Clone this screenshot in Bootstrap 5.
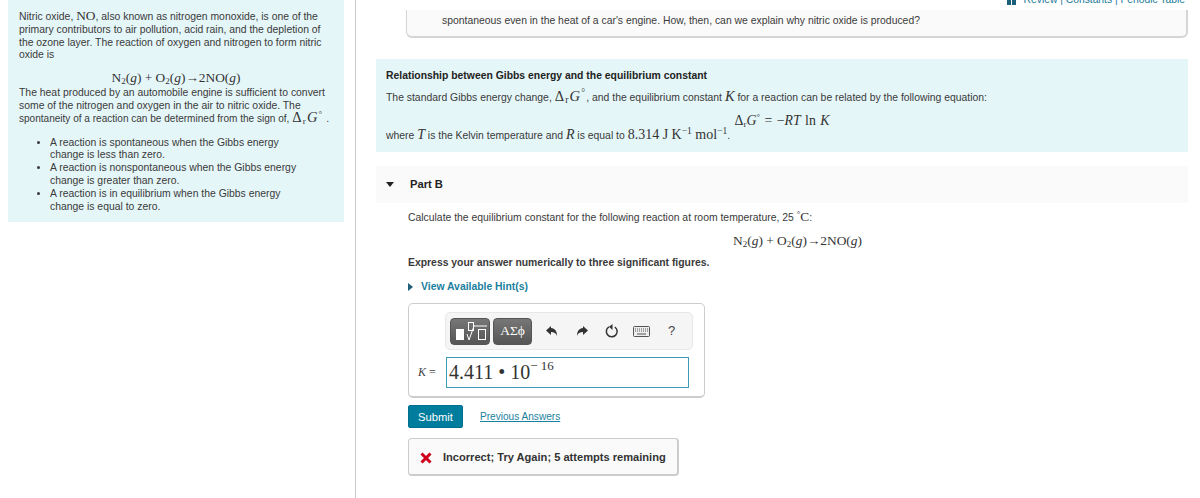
<!DOCTYPE html>
<html lang="en">
  <head>
    <meta charset="UTF-8" />
    <meta name="viewport" content="width=device-width, initial-scale=1" />
    <title>Part B</title>
    <link
      href="https://cdn.jsdelivr.net/npm/bootstrap@5.3.0/dist/css/bootstrap.min.css"
      rel="stylesheet"
    />
    <style>
      html, body { height: 498px; overflow: hidden; }
      body { font-family: "Liberation Sans", Arial, sans-serif; font-size: 10.4px; line-height: 12.8px; color: #3a3a3a; background: #fff; }
      .m { font-family: "Liberation Serif", "DejaVu Serif", serif; font-size: 13.4px; line-height: 0; color: #333; white-space: nowrap; }
      .m i { font-style: italic; }
      .m sub, .m sup { font-size: 9px; line-height: 0; }
      .dg { letter-spacing: 1.2px; font-size: 14.5px; }
      .tight { font-size: 10.05px; }
      .page-wrap { height: 498px; }
      .left-col { width: 356px; flex: none; border-right: 1px solid #ccc; padding: 0 11px 0 8px; }
      .intro-box { background: #e5f6f8; height: 222px; padding: 11px 8px 0 11px; }
      .intro-box p { margin: 0; }
      .intro-eq { text-align: center; font-size: 13.4px; line-height: 16px; margin-top: 8px; padding-right: 3px; height: 17px; }
      .intro-box ul { margin: 11px 0 0; padding: 0 30px 0 31px; }
      .right-col { flex: 1 1 auto; min-width: 0; padding: 0 12px 0 20px; }
      .top-links { height: 10px; overflow: hidden; display: flex; justify-content: flex-end; align-items: flex-start; padding-right: 3px; font-size: 10.3px; line-height: 12px; color: #1b7a99; gap: 8px; }
      .top-links span { margin-top: -6px; }
      .story-box { height: 28px; margin-left: 30px; background: #fafafa; border: 1px solid #d5d5d5; border-top: 0; border-bottom-width: 2px; border-right-width: 2px; border-radius: 0 0 6px 6px; padding: 5px 0 0 35px; }
      .rel-box { background: #e5f6f8; height: 93px; margin-top: 21px; padding: 11px 10px 0; }
      .rel-title { font-weight: 700; color: #222; }
      .rel-text { margin-top: 6px; line-height: 17px; }
      .rel-text .m { font-size: 14.5px; }
      .rel-where .m { font-size: 14px; }
      .rel-text .m sub, .rel-text .m sup, .rel-where .m sup { font-size: 9.5px; }
      .rel-eq { text-align: center; font-size: 13.8px; line-height: 16px; margin-top: 7px; height: 16px; word-spacing: 1px; }
      .rel-where { margin-top: -2px; line-height: 17px; }
      .part-bar { background: #fafafa; height: 37px; margin-top: 14px; display: flex; align-items: center; padding: 0 0 0 10px; font-weight: 700; color: #222; font-size: 11.2px; }
      .caret-down { width: 0; height: 0; border-left: 4.5px solid transparent; border-right: 4.5px solid transparent; border-top: 5px solid #222; margin-right: 16px; }
      .part-body { padding: 9px 0 0 32px; }
      .part-eq { text-align: right; padding-right: 326px; font-size: 13.4px; line-height: 16px; margin-top: 8px; height: 16px; }
      .express { font-weight: 700; margin-top: 8px; color: #3a3a3a; }
      .hint-link { margin-top: 11px; color: #1b7f9f; font-weight: 700; display: flex; align-items: center; }
      .caret-right { width: 0; height: 0; border-top: 4.5px solid transparent; border-bottom: 4.5px solid transparent; border-left: 5px solid #1f5f7a; margin-right: 8px; }
      .answer-box { width: 297px; height: 95px; margin-top: 10px; border: 1px solid #ccc; border-bottom-width: 2px; border-radius: 5px; padding: 8px 12px 0 9px; }
      .tools { margin-left: 27px; width: 248px; height: 38px; background: #f5f5f5; border: 1px solid #e8e8e8; border-radius: 5px; padding: 4px; }
      .tpl-btn { height: 27px; background: linear-gradient(#777, #555); border: 1px solid #555; border-radius: 4px; color: #fff; display: flex; align-items: center; justify-content: center; }
      .tpl-a { width: 40px; margin-right: 3px; }
      .tpl-b { width: 39px; font-family: "Liberation Serif", serif; font-size: 13.5px; margin-right: 12px; }
      .tool-icon { width: 16px; height: 16px; display: block; color: #333; }
      .help-mark { font-size: 13px; color: #444; }
      .ans-row { margin-top: 7px; }
      .ans-label { width: 28px; font-family: "Liberation Serif", serif; font-size: 12px; color: #444; white-space: nowrap; }
      .ans-field { width: 243px; height: 31px; border: 1px solid #3d9bb8; font-family: "Liberation Serif", serif; font-size: 20px; line-height: 29px; color: #333; padding-left: 2px; white-space: nowrap; }
      .ans-field sup { font-size: 13px; top: -9px; line-height: 0; position: relative; vertical-align: baseline; }
      .submit-row { margin-top: 7px; }
      .submit-btn { background: #007c9c; color: #fff; font-size: 11.2px; line-height: 14px; border: 1px solid #00708e; border-radius: 2px; padding: 3px 0; height: 23px; width: 55px; }
      .prev-link { color: #1b7f9f; text-decoration: underline; font-size: 10.1px; margin: 1px 0 0 17px; }
      .feedback { width: 271px; height: 38px; margin-top: 10px; padding-top: 2px; background: #fafafa; border: 1px solid #ccc; border-bottom-width: 2px; border-right-width: 2px; border-radius: 4px; display: flex; align-items: center; padding-left: 11px; font-weight: 700; color: #333; font-size: 11.1px; gap: 11px; white-space: nowrap; }
    </style>
  </head>
  <body>
    <div class="page-wrap d-flex">
      <!-- left intro column -->
      <div class="left-col">
        <div class="intro-box">
          <p>Nitric oxide, <span class="m">NO</span>, also known as nitrogen monoxide, is one of the primary contributors to air pollution, acid rain, and the depletion of the ozone layer. The reaction of oxygen and nitrogen to form nitric oxide is</p>
          <div class="intro-eq m">N<sub>2</sub>(<i>g</i>) + O<sub>2</sub>(<i>g</i>)→2NO(<i>g</i>)</div>
          <p>The heat produced by an automobile engine is sufficient to convert some of the nitrogen and oxygen in the air to nitric oxide. The <span class="tight">spontaneity of a reaction can be determined from the sign of,</span> <span class="m dg">Δ<sub>r</sub><i>G</i><sup>°</sup></span> .</p>
          <ul>
            <li>A reaction is spontaneous when the Gibbs energy change is less than zero.</li>
            <li>A reaction is nonspontaneous when the Gibbs energy change is greater than zero.</li>
            <li>A reaction is in equilibrium when the Gibbs energy change is equal to zero.</li>
          </ul>
        </div>
      </div>

      <!-- right question column -->
      <div class="right-col">
        <div class="top-links">
          <svg width="9" height="5" viewBox="0 0 9 5"><rect width="4" height="5" fill="#1b5f7a" /><rect x="5" width="4" height="5" fill="#1b5f7a" /></svg>
          <span>Review | Constants | Periodic Table</span>
        </div>
        <div class="story-box">spontaneous even in the heat of a car's engine. How, then, can we explain why nitric oxide is produced?</div>

        <div class="rel-box">
          <div class="rel-title">Relationship between Gibbs energy and the equilibrium constant</div>
          <div class="rel-text">The standard Gibbs energy change, <span class="m dg">Δ<sub>r</sub><i>G</i><sup>°</sup></span>, and the equilibrium constant <span class="m"><i>K</i></span> for a reaction can be related by the following equation:</div>
          <div class="rel-eq m">Δ<sub>r</sub><i>G</i><sup>°</sup> = −<i>RT</i> ln <i>K</i></div>
          <div class="rel-where">where <span class="m"><i>T</i></span> is the Kelvin temperature and <span class="m"><i>R</i></span> is equal to <span class="m">8.314 J K<sup>−1</sup> mol<sup>−1</sup></span>.</div>
        </div>

        <div class="part-bar"><span class="caret-down"></span>Part B</div>
        <div class="part-body">
          <div>Calculate the equilibrium constant for the following reaction at room temperature, 25 <span class="m"><sup>°</sup>C</span>:</div>
          <div class="part-eq m">N<sub>2</sub>(<i>g</i>) + O<sub>2</sub>(<i>g</i>)→2NO(<i>g</i>)</div>
          <div class="express">Express your answer numerically to three significant figures.</div>
          <div class="hint-link"><span class="caret-right"></span>View Available Hint(s)</div>

          <div class="answer-box">
            <div class="tools d-flex align-items-center">
              <div class="tpl-btn tpl-a">
                <svg width="38" height="25" viewBox="0 0 38 25"><rect x="5" y="10" width="8" height="11" fill="#fff" /><rect x="17.5" y="3.5" width="5" height="8" fill="none" stroke="#fff" /><path d="M16 15l2 6 5-14h13" fill="none" stroke="#fff" /><rect x="27.5" y="10.5" width="7" height="10" fill="none" stroke="#fff" /></svg>
              </div>
              <div class="tpl-btn tpl-b">ΑΣϕ</div>
              <svg class="tool-icon" viewBox="0 0 16 16"><path d="M7 3 2 7.5 7 12V9c3 0 5 1 6 4 0-5-2-7.5-6-8z" fill="#333" /></svg>
              <svg class="tool-icon" style="margin-left: 14px" viewBox="0 0 16 16"><path d="M9 3l5 4.5L9 12V9c-3 0-5 1-6 4 0-5 2-7.5 6-8z" fill="#333" /></svg>
              <svg class="tool-icon" style="margin-left: 14px" viewBox="0 0 16 16"><path d="M10.8 4A5.4 5.4 0 1 1 5 3.8" fill="none" stroke="#333" stroke-width="1.5" /><path d="M8.5 1v6L5 3.8z" fill="#333" /></svg>
              <svg style="margin-left: 13px" width="17" height="11" viewBox="0 0 17 11"><rect x=".5" y=".5" width="16" height="10" rx="1" fill="#eee" stroke="#555" /><path d="M2 3h13M2 5h13" stroke="#555" stroke-dasharray="1 1" /><path d="M4 8h9" stroke="#555" /></svg>
              <span class="help-mark" style="margin-left: 18px">?</span>
            </div>
            <div class="ans-row d-flex align-items-center">
              <div class="ans-label"><i>K</i> =</div>
              <div class="ans-field">4.411 • 10<sup>− 16</sup></div>
            </div>
          </div>

          <div class="submit-row d-flex align-items-center">
            <button type="button" class="submit-btn">Submit</button>
            <span class="prev-link">Previous Answers</span>
          </div>
          <div class="feedback">
            <svg width="12" height="12" viewBox="0 0 12 12"><path d="M1.5 1.5l9 9M10.5 1.5l-9 9" stroke="#d0021b" stroke-width="3" /></svg>
            Incorrect; Try Again; 5 attempts remaining
          </div>
        </div>
      </div>
    </div>

    <script src="https://cdn.jsdelivr.net/npm/bootstrap@5.3.0/dist/js/bootstrap.bundle.min.js"></script>
  </body>
</html>
